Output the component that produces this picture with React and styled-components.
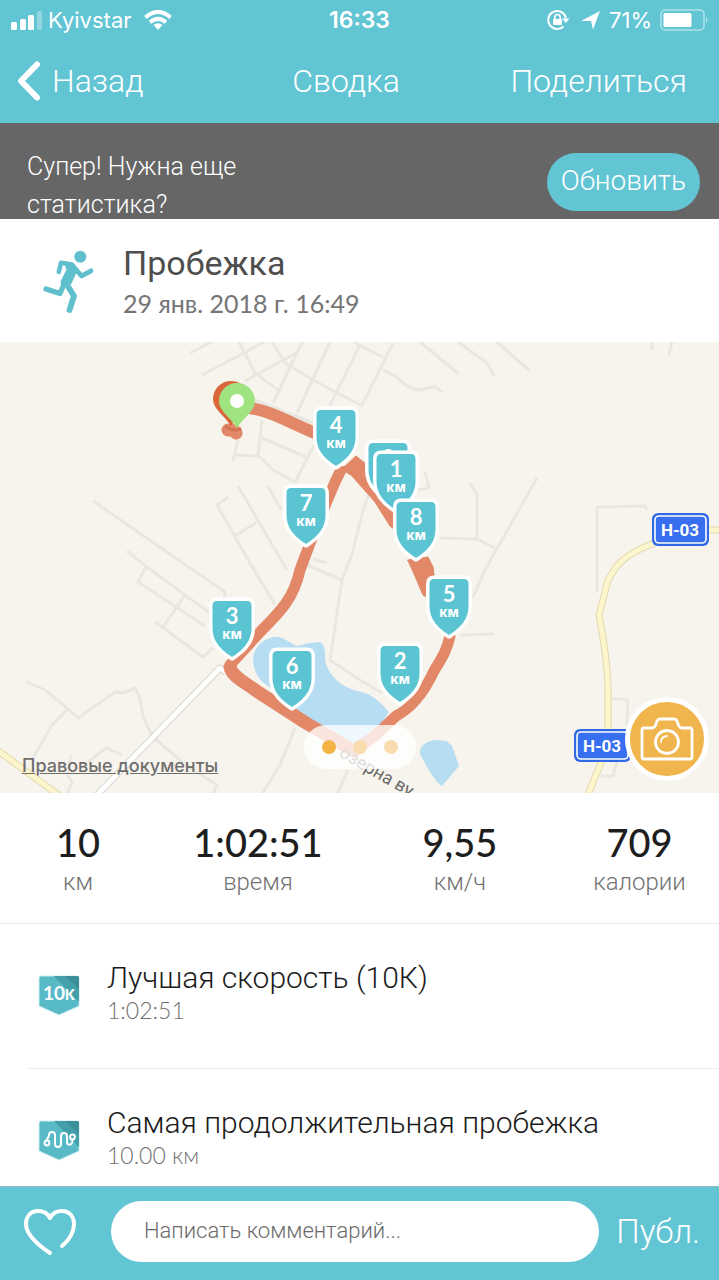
import React from 'react';
import styled, { createGlobalStyle } from 'styled-components';

const TEAL = '#62c5d4';
const SANS = "Roboto, 'Liberation Sans', sans-serif";
const ROUND = "Lato, 'Noto Sans', sans-serif";
const SYSTEM = "Inter, Roboto, sans-serif";

const GlobalStyle = createGlobalStyle`
  *, *::before, *::after { box-sizing: border-box; }
  body { margin: 0; background: #fff; font-family: ${SANS}; font-weight: 300; }
  h1, h2, h3, p, dl, dd, dt, ul { margin: 0; padding: 0; font-weight: inherit; }
  button, input { font: inherit; }
  button { border: 0; padding: 0; background: none; color: inherit; cursor: pointer; }
  svg { display: block; flex: none; }
`;

const Screen = styled.div`
  display: flex;
  flex-direction: column;
  height: 100vh;
`;

const Header = styled.header`
  flex: none;
  background: ${TEAL};
  color: #fff;
`;

const StatusBar = styled.div`
  display: grid;
  grid-template-columns: 1fr auto 1fr;
  align-items: center;
  height: 40px;
  padding: 0 11px;
  font: 400 22px/40px ${SYSTEM};
`;

const StatusGroup = styled.div`
  display: flex;
  align-items: center;
  justify-content: ${(p) => (p.$end ? 'flex-end' : 'flex-start')};
  gap: ${(p) => (p.$end ? 8 : 12)}px;
`;

const Clock = styled.time`
  font-size: 23px;
  font-weight: 600;
`;

const Carrier = styled.div`
  display: flex;
  align-items: center;
  gap: 6px;
`;

const NavBar = styled.nav`
  display: grid;
  grid-template-columns: 1fr auto 1fr;
  align-items: center;
  height: 83px;
  padding: 0 32px 2px 5px;
  font-size: 32px;
  line-height: 40px;
`;

const NavTitle = styled.h1`
  font-size: 32px;
`;

const NavButton = styled.button`
  display: flex;
  align-items: center;
  gap: 10px;
  justify-self: start;
  padding-left: 12px;
`;

const NavAction = styled.button`
  justify-self: end;
`;

const Content = styled.main`
  flex: 1;
  min-height: 0;
  overflow-y: auto;
  scrollbar-width: none;
`;

const Banner = styled.section`
  display: flex;
  align-items: flex-start;
  justify-content: space-between;
  height: 96px;
  padding: 0 19px 0 27px;
  overflow: hidden;
  background: #666;
  color: #fff;
`;

const BannerText = styled.p`
  max-width: 260px;
  padding-top: 25px;
  font-size: 25px;
  line-height: 38px;
`;

const UpgradeButton = styled.button`
  height: 58px;
  margin-top: 30px;
  padding: 0 14px 4px;
  border-radius: 29px;
  background: ${TEAL};
  font-size: 28px;
`;

const Activity = styled.section`
  display: flex;
  gap: 26px;
  padding: 24px 40px 19px;
`;

const RunnerIcon = styled.svg`
  margin-top: 5px;
`;

const ActivityTitle = styled.h2`
  color: #4e4e4e;
  font-size: 34px;
  font-weight: 400;
  line-height: 40px;
`;

const ActivityDate = styled.p`
  color: #757575;
  font: 400 25px/40px ${ROUND};
`;

const MapArea = styled.section`
  position: relative;
  overflow: hidden;
  background: #f7f4ed;
`;

const MapDrawing = styled.svg`
  width: 100%;
  height: auto;
`;

const LegalLink = styled.a`
  position: absolute;
  bottom: 16px;
  left: 22px;
  color: #6f6e6c;
  font: 500 18px/22px ${SYSTEM};
`;

const Pager = styled.div`
  position: absolute;
  bottom: 24px;
  left: 50%;
  display: flex;
  align-items: center;
  justify-content: center;
  gap: 17px;
  width: 112px;
  height: 44px;
  border-radius: 22px;
  background: rgba(255, 255, 255, 0.78);
  transform: translateX(-50%);
`;

const PagerDot = styled.button`
  width: 14px;
  height: 14px;
  border-radius: 50%;
  background: ${(p) => (p.$active ? '#f2b447' : '#f8dcae')};
`;

const CameraButton = styled.button`
  position: absolute;
  right: 10px;
  bottom: 12px;
  display: grid;
  place-items: center;
  width: 84px;
  height: 84px;
  border: 5px solid #fff;
  border-radius: 50%;
  background: #f0b54d;
`;

const Stats = styled.dl`
  display: grid;
  grid-template-columns: 156fr 204fr 200fr 159fr;
  padding: 27px 0 23px;
  border-bottom: 1px solid #e9e9e9;
  text-align: center;
`;

const Stat = styled.div`
  display: flex;
  flex-direction: column-reverse;
`;

const StatLabel = styled.dt`
  color: #727272;
  font-size: 24px;
  line-height: 36px;
`;

const StatValue = styled.dd`
  color: #1e1e1e;
  font: 500 38px/44px ${ROUND};
`;

const Records = styled.ul`
  list-style: none;
`;

const RecordRow = styled.li`
  display: flex;
  gap: 27px;
  margin-left: 28px;
  padding: 36px 0 44px 10px;
  border-bottom: 1px solid #ededed;
`;

const Badge = styled.svg`
  margin-top: 15px;
`;

const RecordTitle = styled.h3`
  color: #1b1b1b;
  font-size: 30px;
  line-height: 36px;
`;

const RecordValue = styled.p`
  color: #6f6f6f;
  font: 300 23px/28px ${ROUND};
`;

const CommentBar = styled.form`
  display: flex;
  flex: none;
  align-items: center;
  height: 94px;
  padding: 0 19px 4px 22px;
  border-top: 1px solid #8fb9c0;
  background: ${TEAL};
  color: #fff;
`;

const CommentInput = styled.input`
  flex: 1;
  min-width: 0;
  height: 61px;
  margin: 0 17px 0 33px;
  padding: 0 33px 2px;
  border: 0;
  border-radius: 31px;
  outline: 0;
  background: #fff;
  color: #333;
  font-size: 22px;
  &::placeholder { color: #6a6a6a; opacity: 1; }
`;

const PublishButton = styled.button`
  font-size: 33px;
`;

const STREETS = [
  'M190 11 212 0', 'M202 33 240 13 264 0', 'M239 0 255 31 278 48', 'M245 39 298 10',
  'M272 0 285 21 313 38 337 51 363 64', 'M302 0 273 61', 'M330 0 297 71', 'M360 3 330 63',
  'M255 58 313 81', 'M262 78 258 113 273 128 295 140 314 103', 'M262 96 306 115',
  'M258 114 236 113', 'M233 119 238 98', 'M228 155 217 163 262 242', 'M238 144 287 228',
  'M235 194 257 180', 'M268 144 281 168', 'M93 159 193 228 225 250 224 260',
  'M127 209 147 225 185 253 213 273', 'M146 225 138 240 205 284', 'M185 253 163 285',
  'M155 280 203 315 213 306', 'M27 340 45 348 68 367 78 376 115 350 123 351 135 346 140 356 143 375 153 395 183 421 217 443 213 452',
  'M68 367 52 383 33 416', 'M71 413 67 432 72 440 67 452', 'M88 420 106 406 122 413',
  'M295 386 280 423 262 452', 'M348 428 337 452', 'M252 223 275 263',
  'M307 223 342 238 352 212 363 168 370 150', 'M342 238 330 318 360 338 382 351', 'M355 1 383 15',
  'M393 1 362 63', 'M383 28 395 34 407 44 418 48 435 45 443 50', 'M420 0 459 32',
  'M458 0 487 21 494 34', 'M497 0 530 29', 'M653 0 651 8', 'M672 0 669 13',
  'M425 130 429 146 418 148', 'M470 141 477 153 477 197 440 196', 'M477 197 495 206',
  'M537 136 485 228 473 255', 'M597 250 597 165 645 164 647 168',
  'M610 356 628 358 627 383', 'M600 434 613 434 617 420', 'M460 293 494 292', 'M313 217 327 221',
];

const HIGHWAYS = [
  'M722 188 700 188 675 193 652 202 Q625 212 614 228 L608 238 599 273 Q607 315 608 345 V386 L600 423 587 455',
  'M-3 408 60 454',
];

const KM_PINS = [
  { n: 9, x: 388, y: 101 }, { n: 1, x: 396, y: 112 }, { n: 4, x: 336, y: 68 },
  { n: 7, x: 306, y: 146 }, { n: 8, x: 416, y: 160 }, { n: 3, x: 232, y: 259 },
  { n: 6, x: 292, y: 309 }, { n: 5, x: 449, y: 237 }, { n: 2, x: 400, y: 304 },
];

const SHIELD = 'M-15 0H15Q19.500 0 19.500 5V27C19.500 42 9 50 0 56C-9 50 -19.500 42 -19.500 27V5Q-19.500 0 -15 0Z';

const KmPin = ({ n, x, y }) => (
  <g transform={`translate(${x} ${y})`} textAnchor="middle" fill="#fff">
    <path d={SHIELD} fill="#5bc4d3" stroke="#fff" strokeWidth="7" strokeLinejoin="round" paintOrder="stroke" />
    <text y="23" fontFamily="Lato, sans-serif" fontWeight="700" fontSize="22">{n}</text>
    <text y="38" fontFamily="Inter, sans-serif" fontWeight="700" fontSize="14">км</text>
  </g>
);

const RoadSign = ({ x, y }) => (
  <g transform={`translate(${x} ${y})`}>
    <rect width="57" height="33" rx="6" fill="#2f69e6" />
    <rect x="3" y="3" width="51" height="27" rx="4" fill="#376ff0" stroke="#fff" strokeWidth="1.600" />
    <text x="28" y="23" textAnchor="middle" fill="#fff" fontFamily="Roboto, sans-serif" fontWeight="700" fontSize="17">Н-03</text>
  </g>
);

const DROP = 'M0 27C-7 16 -18 10 -18 0A18 18 0 0 1 18 0C18 10 7 16 0 27Z';

const RouteMap = () => (
  <MapDrawing viewBox="0 0 719 451" role="img" aria-label="Карта пробежки">
    <g fill="none" stroke="#e9e7e1" strokeWidth="3" strokeLinejoin="round">
      {STREETS.map((d) => <path key={d} d={d} />)}
    </g>
    <g fill="none" strokeLinejoin="round">
      <path d="M226 330 220 326 96 454" stroke="#d9d7d1" strokeWidth="7" />
      <path d="M226 330 220 326 96 454" stroke="#fff" strokeWidth="5" />
      {HIGHWAYS.map((d) => <path key={d} d={d} stroke="#e2d8ae" strokeWidth="7" />)}
      {HIGHWAYS.map((d) => <path key={`${d}-fill`} d={d} stroke="#fdf5cb" strokeWidth="5" />)}
    </g>
    <g fill="#b6ddf2">
      <path d="M253 318C253 306 263 296 275 295C283 294 288 300 297 304L309 301 320 300Q326 302 325 318C328 334 343 347 362 350Q376 354 389 370L366 405 340 405 306 378 268 344Q254 336 253 318Z" />
      <path d="M420 408C422 402 428 399 435 398L447 399 452 404 459 424 442 444C435 440 427 425 420 412Z" />
    </g>
    <g fill="none" stroke="#e28767" strokeLinecap="round" strokeLinejoin="round">
      <path d="M250 66C275 70 295 84 325 95" strokeWidth="12" />
      <path d="M343 124 336 138C322 170 312 195 300 228C294 256 280 270 262 288L229 324" strokeWidth="11" strokeLinecap="butt" />
      <path d="M342 127 356 114 366 122 371 141 386 161 402 175 398 190 390 184 375 160 352 134Z" fill="#e28767" strokeWidth="1" />
      <path d="M408 218 428 215 433 225 435 240 430 257 423 253 414 232Z" fill="#e28767" strokeWidth="1" />
      <path d="M450 294C446 312 440 318 434 329C425 348 414 365 396 374L377 392 354 409" strokeWidth="11" />
      <path d="M230 325C232 335 245 340 258 350L306 381 354 409" strokeWidth="13" />
      <path d="M228 88Q235 88 236 91" strokeWidth="13" />
      <path d="M226 85Q234 90 240 87" stroke="#cf7352" strokeWidth="3" />
    </g>
    <text transform="translate(338 414) rotate(30)" fill="#6d6c6a" fontFamily="Roboto, sans-serif" fontWeight="400" fontSize="18">озерна ву</text>
    <g fill="#d9673a"><path d={DROP} transform="translate(231 57)" /></g>
    <g transform="translate(237 59)">
      <path d={DROP} fill="#9fe481" />
      <circle r="7" fill="#fff" />
    </g>
    <RoadSign x={652} y={171} />
    <RoadSign x={574} y={387} />
    {KM_PINS.map((pin) => <KmPin key={pin.n} {...pin} />)}
  </MapDrawing>
);

const BadgeShape = ({ children }) => (
  <Badge width="42" height="42" viewBox="0 0 42 42" aria-hidden="true">
    <path d="M3 1H39Q41 1 41 3V31L21 40 1 31V3Q1 1 3 1Z" fill="#58b9c7" stroke="#c9edf2" strokeWidth="1" />
    <path d="M16 1H39Q41 1 41 3V27Z" fill="#43a0ab" />
    <path d="M27 1H39Q41 1 41 3V14Z" fill="#3b8f99" />
    {children}
  </Badge>
);

const TenKBadge = () => (
  <BadgeShape>
    <text x="21" y="25" textAnchor="middle" fill="#fff" fontFamily="Lato, sans-serif" fontWeight="700" fontSize="19">
      10<tspan fontFamily="Inter, sans-serif" fontSize="14">К</tspan>
    </text>
  </BadgeShape>
);

const RouteBadge = () => (
  <BadgeShape>
    <g fill="none" stroke="#fff" strokeWidth="2" strokeLinecap="round">
      <circle cx="9" cy="23" r="2.400" />
      <circle cx="34.500" cy="17" r="2.400" />
      <path d="M9 20.500C9 17 11 18 11 15C11 11 17 11 17 15V24C17 28 23 28 23 24V16C23 12 29 12 29 16V22C29 26 34.500 26 34.500 19.500" />
    </g>
  </BadgeShape>
);

const STATS = [
  ['10', 'км'], ['1:02:51', 'время'], ['9,55', 'км/ч'], ['709', 'калории'],
];

const RECORDS = [
  { title: 'Лучшая скорость (10К)', value: '1:02:51', Icon: TenKBadge },
  { title: 'Самая продолжительная пробежка', value: '10.00 км', Icon: RouteBadge },
];

export default function App() {
  return (
    <Screen>
      <GlobalStyle />
      <Header>
        <StatusBar>
          <StatusGroup>
            <Carrier>
              <svg width="31" height="19" viewBox="0 0 31 19" fill="#fff" aria-hidden="true">
                <rect x="0" y="11" width="6" height="8" rx="1.500" />
                <rect x="9" y="8" width="6" height="11" rx="1.500" />
                <rect x="17" y="4" width="6" height="15" rx="1.500" />
                <rect x="26" y="0" width="5" height="19" rx="1.500" opacity="0.300" />
              </svg>
              <span>Kyivstar</span>
            </Carrier>
            <svg width="28" height="20" viewBox="0 0 28 20" fill="none" stroke="#fff" strokeWidth="4" aria-hidden="true">
              <path d="M1.500 7.500Q14 -3.500 26.500 7.500" />
              <path d="M6 12.300Q14 5.500 22 12.300" />
              <path d="M9.500 15Q14 11.400 18.500 15L14 20Z" fill="#fff" stroke="none" />
            </svg>
          </StatusGroup>
          <Clock>16:33</Clock>
          <StatusGroup $end>
            <svg width="54" height="22" viewBox="0 0 54 22" aria-hidden="true">
              <path d="M16.500 17.500A9 9 0 1 1 19 9" fill="none" stroke="#fff" strokeWidth="2" />
              <path d="M15 9.500H22.500L18.800 14Z" fill="#fff" />
              <rect x="6" y="10" width="9" height="6" rx="1" fill="#fff" />
              <path d="M7.800 10V8.200A2.700 2.700 0 0 1 13.200 8.200V10" fill="none" stroke="#fff" strokeWidth="1.700" />
              <path d="M34 12 53 2 46 20.500 44 12Z" fill="#fff" />
            </svg>
            <span>71%</span>
            <svg width="48" height="22" viewBox="0 0 48 22" aria-hidden="true">
              <rect x="1" y="1" width="43" height="20" rx="4" fill="none" stroke="#fff" strokeWidth="1.500" opacity="0.500" />
              <rect x="3.500" y="4" width="28" height="14" rx="1.500" fill="#fff" />
              <path d="M46 7.500Q49 11 46 14.500Z" fill="#fff" opacity="0.500" />
            </svg>
          </StatusGroup>
        </StatusBar>
        <NavBar>
          <NavButton type="button">
            <svg width="25" height="40" viewBox="0 0 25 40" fill="none" stroke="#fff" strokeWidth="6" strokeLinecap="round" strokeLinejoin="round" aria-hidden="true">
              <path d="M20 3.500 4 20 20 36.500" />
            </svg>
            Назад
          </NavButton>
          <NavTitle>Сводка</NavTitle>
          <NavAction type="button">Поделиться</NavAction>
        </NavBar>
      </Header>

      <Content>
        <Banner>
          <BannerText>Супер! Нужна еще статистика?</BannerText>
          <UpgradeButton type="button">Обновить</UpgradeButton>
        </Banner>

        <Activity>
          <RunnerIcon width="57" height="68" viewBox="0 0 57 68" fill="none" stroke="#5fbfcc" strokeLinecap="round" strokeLinejoin="round" aria-hidden="true">
            <circle cx="40.300" cy="8.700" r="6" fill="#5fbfcc" stroke="none" />
            <path d="M32 16.500 21 14.800 18.800 24" strokeWidth="4.600" />
            <path d="M33 18 41.500 28 51 22.800" strokeWidth="4.800" />
            <path d="M26 15 33 17 36 22 30 35 24 38 22 34 28 22Z" fill="#5fbfcc" strokeWidth="3" />
            <path d="M24.500 35 20 45.500 6 41" strokeWidth="5.200" />
            <path d="M26 35 34 48 29.500 62" strokeWidth="5.800" />
          </RunnerIcon>
          <div>
            <ActivityTitle>Пробежка</ActivityTitle>
            <ActivityDate>29 янв. 2018 г. 16:49</ActivityDate>
          </div>
        </Activity>

        <MapArea>
          <RouteMap />
          <LegalLink href="#legal">Правовые документы</LegalLink>
          <Pager>
            <PagerDot type="button" aria-label="1" $active />
            <PagerDot type="button" aria-label="2" />
            <PagerDot type="button" aria-label="3" />
          </Pager>
          <CameraButton type="button" aria-label="Камера">
            <svg width="54" height="44" viewBox="0 0 54 44" fill="none" stroke="#fff" strokeWidth="2.800" strokeLinejoin="round" aria-hidden="true">
              <path d="M4 11H12Q15 11 16 7L17 4Q18 2 20 2H34Q36 2 37 4L38 7Q39 11 42 11H50Q52 11 52 13V40Q52 42 50 42H4Q2 42 2 40V13Q2 11 4 11Z" />
              <circle cx="27" cy="25" r="11.500" />
              <path d="M21 25Q21 19.500 27 19" strokeWidth="1.800" strokeLinecap="round" />
            </svg>
          </CameraButton>
        </MapArea>

        <Stats>
          {STATS.map(([value, label]) => (
            <Stat key={label}>
              <StatLabel>{label}</StatLabel>
              <StatValue>{value}</StatValue>
            </Stat>
          ))}
        </Stats>

        <Records>
          {RECORDS.map(({ title, value, Icon }) => (
            <RecordRow key={title}>
              <Icon />
              <div>
                <RecordTitle>{title}</RecordTitle>
                <RecordValue>{value}</RecordValue>
              </div>
            </RecordRow>
          ))}
        </Records>
      </Content>

      <CommentBar>
        <button type="button" aria-label="Нравится">
          <svg width="56" height="50" viewBox="0 0 56 50" fill="none" stroke="#fff" strokeWidth="4" strokeLinecap="round" strokeLinejoin="round" aria-hidden="true">
            <path d="M28 46C13 36 4 27 4 17C4 9 9 4 16 4C22 4 26 7 28 11C30 7 34 4 40 4C47 4 52 9 52 17C52 25 47 33 40 39" />
          </svg>
        </button>
        <CommentInput aria-label="Комментарий" placeholder="Написать комментарий..." />
        <PublishButton type="submit">Публ.</PublishButton>
      </CommentBar>
    </Screen>
  );
}
